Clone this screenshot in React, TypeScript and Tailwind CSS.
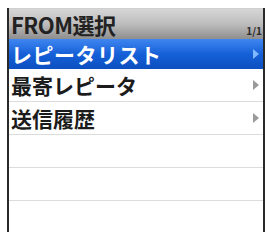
const rows = ["レピータリスト", "最寄レピータ", "送信履歴", "", "", ""];

function Arrow({ selected }: { selected: boolean }) {
  return (
    <svg width="6" height="10" viewBox="0 0 6 10" className="shrink-0">
      <polygon points="0,0 6,5 0,10" fill={selected ? "#7fb8ff" : "#9a9a9a"} />
    </svg>
  );
}

export default function App() {
  return (
    <div className="w-[267px] h-[232px] bg-white overflow-hidden pt-[8px] pl-[7px] pr-[2px]">
      <div
        className="h-[240px] border-l-2 border-r-2 border-[#2a2a2a] bg-white flex flex-col"
        style={{ fontFamily: '"Noto Sans CJK JP", "Noto Sans", sans-serif' }}
      >
        <div className="h-[31px] shrink-0 flex items-end justify-between pl-[2px] pr-[1px] bg-gradient-to-b from-[#d6d6d6] via-[#bdbdbd] to-[#8e8e8e] border-t border-[#cfcfcf]">
          <span className="text-[22px] leading-[30px] font-semibold text-[#222] tracking-[-0.5px]">FROM選択</span>
          <span className="text-[10px] leading-[12px] font-bold text-[#2a2a2a] mb-[2px]">1/1</span>
        </div>
        {rows.map((r, i) => {
          const selected = i === 0;
          return (
            <div
              key={i}
              className={
                selected
                  ? "h-[30px] shrink-0 flex items-center justify-between pl-[2px] pr-[4px] bg-gradient-to-b from-[#3f86f0] via-[#1560d8] to-[#0c4fc0]"
                  : "h-[33px] shrink-0 flex items-center justify-between pl-[2px] pr-[4px] border-b border-[#dcdcdc]"
              }
            >
              <span
                className={
                  selected
                    ? "text-[21px] leading-[26px] font-semibold text-white tracking-[0.5px]"
                    : "text-[21px] leading-[26px] font-semibold text-[#1b1b1b]"
                }
              >
                {r}
              </span>
              {r && <Arrow selected={selected} />}
            </div>
          );
        })}
      </div>
    </div>
  );
}
